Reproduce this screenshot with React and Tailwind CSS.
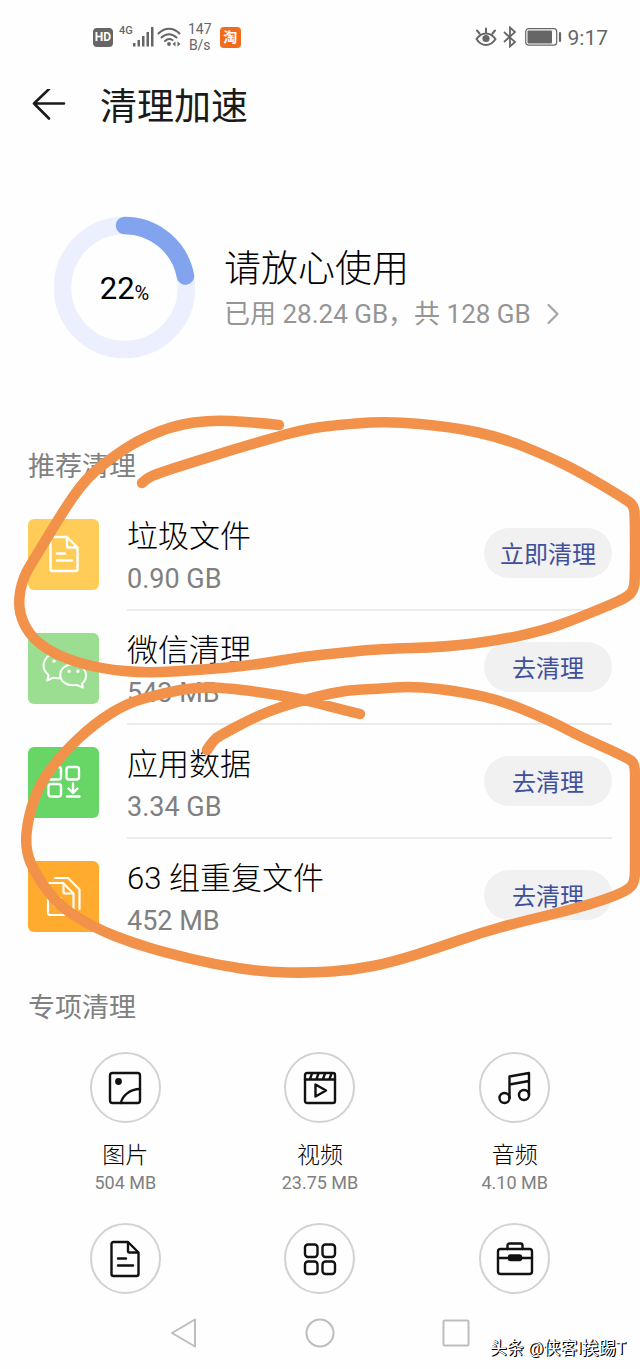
import { ChevronRight } from "lucide-react";

const INK = "#1a1a1a";

const cleanItems = [
  { id: "junk", title: "垃圾文件", size: "0.90 GB", action: "立即清理", tile: "bg-[#ffcd57]", Icon: FileIcon },
  { id: "wechat", title: "微信清理", size: "543 MB", action: "去清理", tile: "bg-[#9bde91]", Icon: WechatIcon },
  { id: "apps", title: "应用数据", size: "3.34 GB", action: "去清理", tile: "bg-[#67d667]", Icon: AppDataIcon },
  { id: "dupes", title: "63 组重复文件", size: "452 MB", action: "去清理", tile: "bg-[#ffab2e]", Icon: CopiesIcon },
];

const categories = [
  { id: "images", label: "图片", size: "504 MB", Icon: ImageIcon },
  { id: "videos", label: "视频", size: "23.75 MB", Icon: VideoIcon },
  { id: "audio", label: "音频", size: "4.10 MB", Icon: MusicIcon },
  { id: "docs", name: "文档", Icon: FileIcon },
  { id: "installed", name: "应用", Icon: GridIcon },
  { id: "more", name: "工具", Icon: BriefcaseIcon },
];

// Trazos dibujados a mano sobre la lista
const upperStroke = [
  [279, 425], [250, 422], [212, 420], [176, 425], [143, 438], [118, 453], [86, 478], [62, 513],
  [38, 553], [23, 577], [18, 603], [23, 624], [37, 643], [65, 659], [103, 669], [145, 673],
  [200, 670], [255, 665], [300, 657], [340, 653], [377, 649], [447, 647], [500, 640], [545, 630],
  [573, 620], [600, 609], [626, 598], [634, 590], [635, 575], [635, 520], [634, 506], [627, 500],
  [580, 472], [547, 456], [503, 438], [453, 427], [387, 421], [325, 426], [298, 431], [273, 438],
  [235, 449], [200, 460], [165, 471], [149, 477], [142, 483],
];

const lowerStroke = [
  [360, 714], [335, 708], [307, 700], [260, 692], [225, 688], [197, 687], [164, 693], [127, 703],
  [94, 724], [63, 753], [40, 783], [28, 817], [25, 850], [37, 877], [60, 907], [97, 929],
  [133, 943], [167, 953], [217, 965], [265, 972], [310, 973], [353, 970], [393, 962], [440, 947],
  [480, 933], [520, 922], [570, 910], [607, 899], [630, 889], [635, 880], [635, 860], [635, 785],
  [635, 764], [628, 758], [577, 735], [553, 722], [503, 701], [463, 692], [413, 686], [377, 689],
  [347, 690], [315, 697], [280, 707], [253, 718], [219, 736], [213, 741], [207, 750],
];

function smoothPath(points) {
  let d = `M${points[0][0]} ${points[0][1]}`;
  for (let i = 1; i < points.length - 1; i++) {
    const [x, y] = points[i];
    const [nx, ny] = points[i + 1];
    d += ` Q${x} ${y} ${(x + nx) / 2} ${(y + ny) / 2}`;
  }
  const last = points[points.length - 1];
  return `${d} L${last[0]} ${last[1]}`;
}

function Glyph({ children, size = 40, width = 2 }) {
  return (
    <svg
      width={size}
      height={size}
      viewBox="0 0 40 40"
      fill="none"
      stroke="currentColor"
      strokeWidth={width}
      strokeLinecap="round"
      strokeLinejoin="round"
      aria-hidden="true"
    >
      {children}
    </svg>
  );
}

function FileIcon() {
  return (
    <Glyph width={2.4}>
      <path d="M8.500 3H23L33.500 13.500V35a2 2 0 0 1-2 2H8.500a2 2 0 0 1-2-2V5a2 2 0 0 1 2-2Z" />
      <path d="M23 3.500V12a1.500 1.500 0 0 0 1.500 1.500H33M13 19.500h8M13 26.500h15" />
    </Glyph>
  );
}

function WechatIcon() {
  return (
    <Glyph size={50} width={1.6}>
      <path d="M17.500 28c-2 .4-4 .3-6-.3L6.500 30l1.200-4.200C-1 18.500 5.500 7.500 15.500 7.500c6.500 0 11.500 4 12 9" />
      <path d="M34.500 32.500c6.500-6 2-15.500-7-15.500-6 0-10.500 3.700-10.500 8.500 0 5.500 6 9.500 13 8l5 2.200Z" />
      <path d="M12 14.500h.1M20 14.500h.1M24 22.500h.1M31 22.500h.1" strokeWidth="2.600" />
    </Glyph>
  );
}

function AppDataIcon() {
  return (
    <Glyph width={2.4}>
      <rect x="4.500" y="5" width="12.500" height="12.500" rx="2.500" />
      <rect x="22.500" y="5" width="12.500" height="12.500" rx="2.500" />
      <rect x="4.500" y="22" width="12.500" height="12.500" rx="2.500" />
      <path d="M29 21.500v9M24.500 26.500 29 31l4.500-4.500M23 34.500h12.500" />
    </Glyph>
  );
}

function CopiesIcon() {
  return (
    <Glyph width={2.2}>
      <path d="M6 7h13l10.500 10.500V37a2 2 0 0 1-2 2H6a2 2 0 0 1-2-2V9a2 2 0 0 1 2-2Z" />
      <path d="M19.500 7.500V16a1.500 1.500 0 0 0 1.500 1.500h8M10.500 22h6M10.500 29.500h13.500" />
      <path d="M11 2h13L35.500 13.500V33" />
    </Glyph>
  );
}

function ImageIcon() {
  return (
    <Glyph width={2.4}>
      <rect x="5" y="5" width="30" height="30" rx="2.500" />
      <circle cx="13.500" cy="13.500" r="3.400" fill="currentColor" stroke="none" />
      <path d="M16 35c1-7 9-14 19-14" />
    </Glyph>
  );
}

function VideoIcon() {
  return (
    <Glyph width={2.4}>
      <rect x="5" y="5" width="30" height="30" rx="2" />
      <path d="M5 11.500h30M12 5.500l-2 5.500M18.500 5.500l-2 5.500M25 5.500 23 11M31.500 5.500l-2 5.500M15.500 16.500v12l10.500-6Z" />
    </Glyph>
  );
}

function MusicIcon() {
  return (
    <Glyph width={2.4}>
      <circle cx="9.500" cy="30" r="5" />
      <circle cx="29" cy="27" r="5" />
      <path d="M14.500 30V8.500L34 5v22M14.500 16.500 34 13" />
    </Glyph>
  );
}

function GridIcon() {
  return (
    <Glyph width={2.4}>
      <rect x="5" y="5.500" width="12.500" height="12.500" rx="3" />
      <rect x="22.500" y="5.500" width="12.500" height="12.500" rx="3" />
      <rect x="5" y="22.500" width="12.500" height="12.500" rx="3" />
      <rect x="22.500" y="22.500" width="12.500" height="12.500" rx="3" />
    </Glyph>
  );
}

function BriefcaseIcon() {
  return (
    <Glyph width={2.4}>
      <rect x="3" y="10" width="34" height="25" rx="2.500" />
      <path d="M12.500 10V6.500a2 2 0 0 1 2-2h11a2 2 0 0 1 2 2V10M3 19h34" />
      <rect x="14" y="16.500" width="12" height="4.500" rx="1.500" fill="currentColor" />
    </Glyph>
  );
}

function StatusBar() {
  return (
    <div className="flex h-[74px] items-center justify-between pr-8 pl-[93px] text-[#666]">
      <div className="flex items-center">
        <span className="flex h-[19px] w-5 items-center justify-center rounded-sm bg-[#666] text-xs font-bold text-white">
          HD
        </span>
        <span className="ml-1.5 self-start text-[11px] leading-5 font-medium">4G</span>
        <svg width="22" height="20" viewBox="0 0 22 20" fill="currentColor" aria-hidden="true">
          <path d="M0 16h2.500v3.500H0zM4.500 13H7v6.500H4.500zM9 9h2.500v10.500H9zM13.500 5H16v14.500h-2.500zM18 0h2.500v19.500H18z" />
        </svg>
        <svg className="ml-0.5" width="25" height="20" viewBox="0 0 25 20" fill="none" stroke="currentColor" strokeWidth="2" strokeLinecap="round" aria-hidden="true">
          <path d="M1.500 6.500c6-6.500 15-6.500 21 0M4.500 10.500c4.500-4.500 10.500-4.500 15 0M8 14c2.300-2.200 5-2.500 7.500-1" />
          <circle cx="12" cy="17" r="1.900" fill="currentColor" stroke="none" />
          <path d="M18.500 14.500v5l-3-2.500ZM20.500 14.500v5l3-2.500Z" fill="currentColor" stroke="none" />
        </svg>
        <span className="ml-1.5 w-6 text-center text-sm leading-4">147 B/s</span>
        <span className="ml-2 flex size-[21px] items-center justify-center rounded-sm bg-[#f26a1b] text-sm leading-4 font-bold text-white">
          淘
        </span>
      </div>
      <div className="flex items-center">
        <svg width="22" height="20" viewBox="0 0 22 20" fill="none" stroke="currentColor" strokeWidth="2" strokeLinecap="round" aria-hidden="true">
          <path d="M1.500 12c5-7.500 14-7.500 19 0-5 8-14 8-19 0ZM11 1.500v4M2 3.500l2.500 3M20 3.500l-2.500 3" />
          <circle cx="11" cy="11.500" r="3.600" fill="currentColor" stroke="none" />
        </svg>
        <svg className="ml-1.5" width="14" height="22" viewBox="0 0 14 22" fill="none" stroke="currentColor" strokeWidth="1.800" aria-hidden="true">
          <path d="m1 6 11 10-5 4.500v-19L12 6 1 16" />
        </svg>
        <svg className="ml-2" width="37" height="18" viewBox="0 0 37 18" fill="none" stroke="currentColor" aria-hidden="true">
          <rect x=".7" y=".7" width="31" height="16.500" rx="3" strokeWidth="1.200" />
          <rect x="2.500" y="2.500" width="24.500" height="13" rx="1" fill="currentColor" stroke="none" />
          <path d="M35 5v8" strokeWidth="2.200" strokeLinecap="round" />
        </svg>
        <span className="ml-1.5 pt-0.5 text-[21px] leading-6">9:17</span>
      </div>
    </div>
  );
}

function UsageRing({ percent }) {
  const length = 2 * Math.PI * 62;
  return (
    <div className="relative size-[143px] shrink-0">
      <svg className="size-full -rotate-90" viewBox="0 0 143 143" fill="none" strokeWidth="17.500" aria-hidden="true">
        <circle cx="71.500" cy="71.500" r="62" stroke="#ecf0fe" />
        <circle
          cx="71.500"
          cy="71.500"
          r="62"
          stroke="#82a4ef"
          strokeLinecap="round"
          strokeDasharray={`${(length * percent) / 100} ${length}`}
        />
      </svg>
      <p className="absolute inset-0 flex items-center justify-center pt-1 text-black">
        <span className="text-[31px]">{percent}</span>
        <span className="pt-1.5 text-xl">%</span>
      </p>
    </div>
  );
}

function CleanRow({ item, last }) {
  const { Icon } = item;
  return (
    <li className="flex items-center gap-7">
      <div className={`flex size-[71px] shrink-0 items-center justify-center rounded-md text-white ${item.tile}`}>
        <Icon />
      </div>
      <div
        className={`flex h-[114px] grow items-center justify-between border-b-2 ${
          last ? "border-transparent" : "border-[#ebebeb]"
        }`}
      >
        <div className="pt-1.5">
          <h3 className="text-[31px] leading-[46px] font-light text-black">{item.title}</h3>
          <p className="text-[27px] leading-[38px] text-[#808080]">{item.size}</p>
        </div>
        <button
          type="button"
          className="h-[50px] w-32 cursor-pointer rounded-full bg-[#f1f1f1] pt-1 text-2xl text-[#3f4f9c]"
        >
          {item.action}
        </button>
      </div>
    </li>
  );
}

function Category({ item }) {
  const { Icon } = item;
  return (
    <li className="flex flex-col items-center">
      <button
        type="button"
        aria-label={item.label || item.name}
        className="flex size-[71px] cursor-pointer items-center justify-center rounded-full border-2 border-[#d2d2d2] text-[#111]"
      >
        <Icon />
      </button>
      {item.label && (
        <>
          <span className="mt-[18px] text-[23px] leading-[30px] font-light text-black">{item.label}</span>
          <span className="text-lg leading-6 text-[#808080]">{item.size}</span>
        </>
      )}
    </li>
  );
}

function Scribbles() {
  return (
    <svg
      className="pointer-events-none absolute inset-x-0 top-0 w-full"
      viewBox="0 0 640 1369"
      fill="none"
      stroke="#f2914a"
      strokeWidth="10.500"
      strokeLinecap="round"
      strokeLinejoin="round"
      aria-hidden="true"
    >
      <path d={smoothPath(upperStroke)} />
      <path d={smoothPath(lowerStroke)} />
    </svg>
  );
}

function NavBar() {
  const button = "flex cursor-pointer justify-center";
  return (
    <nav className="grid grid-cols-3 items-center px-[116px] pt-6 pb-[22px] text-[#bdbdbd]">
      <button type="button" aria-label="返回" className={button}>
        <svg width="30" height="30" viewBox="0 0 30 30" fill="none" stroke="currentColor" strokeWidth="2" strokeLinejoin="round">
          <path d="M26 1.500v27L3 15Z" />
        </svg>
      </button>
      <button type="button" aria-label="主页" className={button}>
        <svg width="30" height="30" viewBox="0 0 30 30" fill="none" stroke="currentColor" strokeWidth="2">
          <circle cx="15" cy="15" r="13.500" />
        </svg>
      </button>
      <button type="button" aria-label="最近任务" className={button}>
        <svg width="30" height="30" viewBox="0 0 30 30" fill="none" stroke="currentColor" strokeWidth="2" strokeLinejoin="round">
          <rect x="2.500" y="2.500" width="25" height="25" rx="1" />
        </svg>
      </button>
    </nav>
  );
}

export default function App() {
  return (
    <div className="relative overflow-hidden bg-[#fefefe] font-['Roboto','Noto_Sans_CJK_SC',sans-serif]">
      <StatusBar />

      <header className="flex h-16 items-center gap-[34px] px-8">
        <button type="button" aria-label="返回" className="cursor-pointer">
          <svg width="34" height="34" viewBox="0 0 34 34" fill="none" stroke={INK} strokeWidth="2.600" strokeLinecap="round" strokeLinejoin="round">
            <path d="M32 14.500H2M17 0 2 14.500l15 15" />
          </svg>
        </button>
        <h1 className="pt-1 text-[37px] leading-[54px] text-[#1a1a1a]">清理加速</h1>
      </header>

      <main className="px-7">
        <section className="flex items-center gap-7 pt-[78px] pl-[25px]">
          <UsageRing percent={22} />
          <div className="pt-1">
            <h2 className="text-[37px] leading-[48px] font-light text-black">请放心使用</h2>
            <a href="#storage" className="flex items-center gap-1 text-[26px] leading-10 text-[#959595]">
              已用 28.24 GB，共 128 GB
              <ChevronRight size={36} strokeWidth={1.5} className="text-[#a5a5a5]" />
            </a>
          </div>
        </section>

        <section>
          <h2 className="pt-[88px] pb-2.5 text-[27px] leading-10 text-[#808080]">推荐清理</h2>
          <ul>
            {cleanItems.map((item, i) => (
              <CleanRow key={item.id} item={item} last={i === cleanItems.length - 1} />
            ))}
          </ul>
        </section>

        <section>
          <h2 className="pt-[35px] pb-6 text-[27px] leading-10 text-[#808080]">专项清理</h2>
          <ul className="grid grid-cols-3 gap-y-7">
            {categories.map((item) => (
              <Category key={item.id} item={item} />
            ))}
          </ul>
        </section>
      </main>

      <NavBar />
      <Scribbles />

      <p className="absolute right-3.5 bottom-2 text-[17px] leading-7 text-white [text-shadow:1px_1px_0_#000,1px_0_0_#000]">
        头条 @侠客I挨踢T
      </p>
    </div>
  );
}
